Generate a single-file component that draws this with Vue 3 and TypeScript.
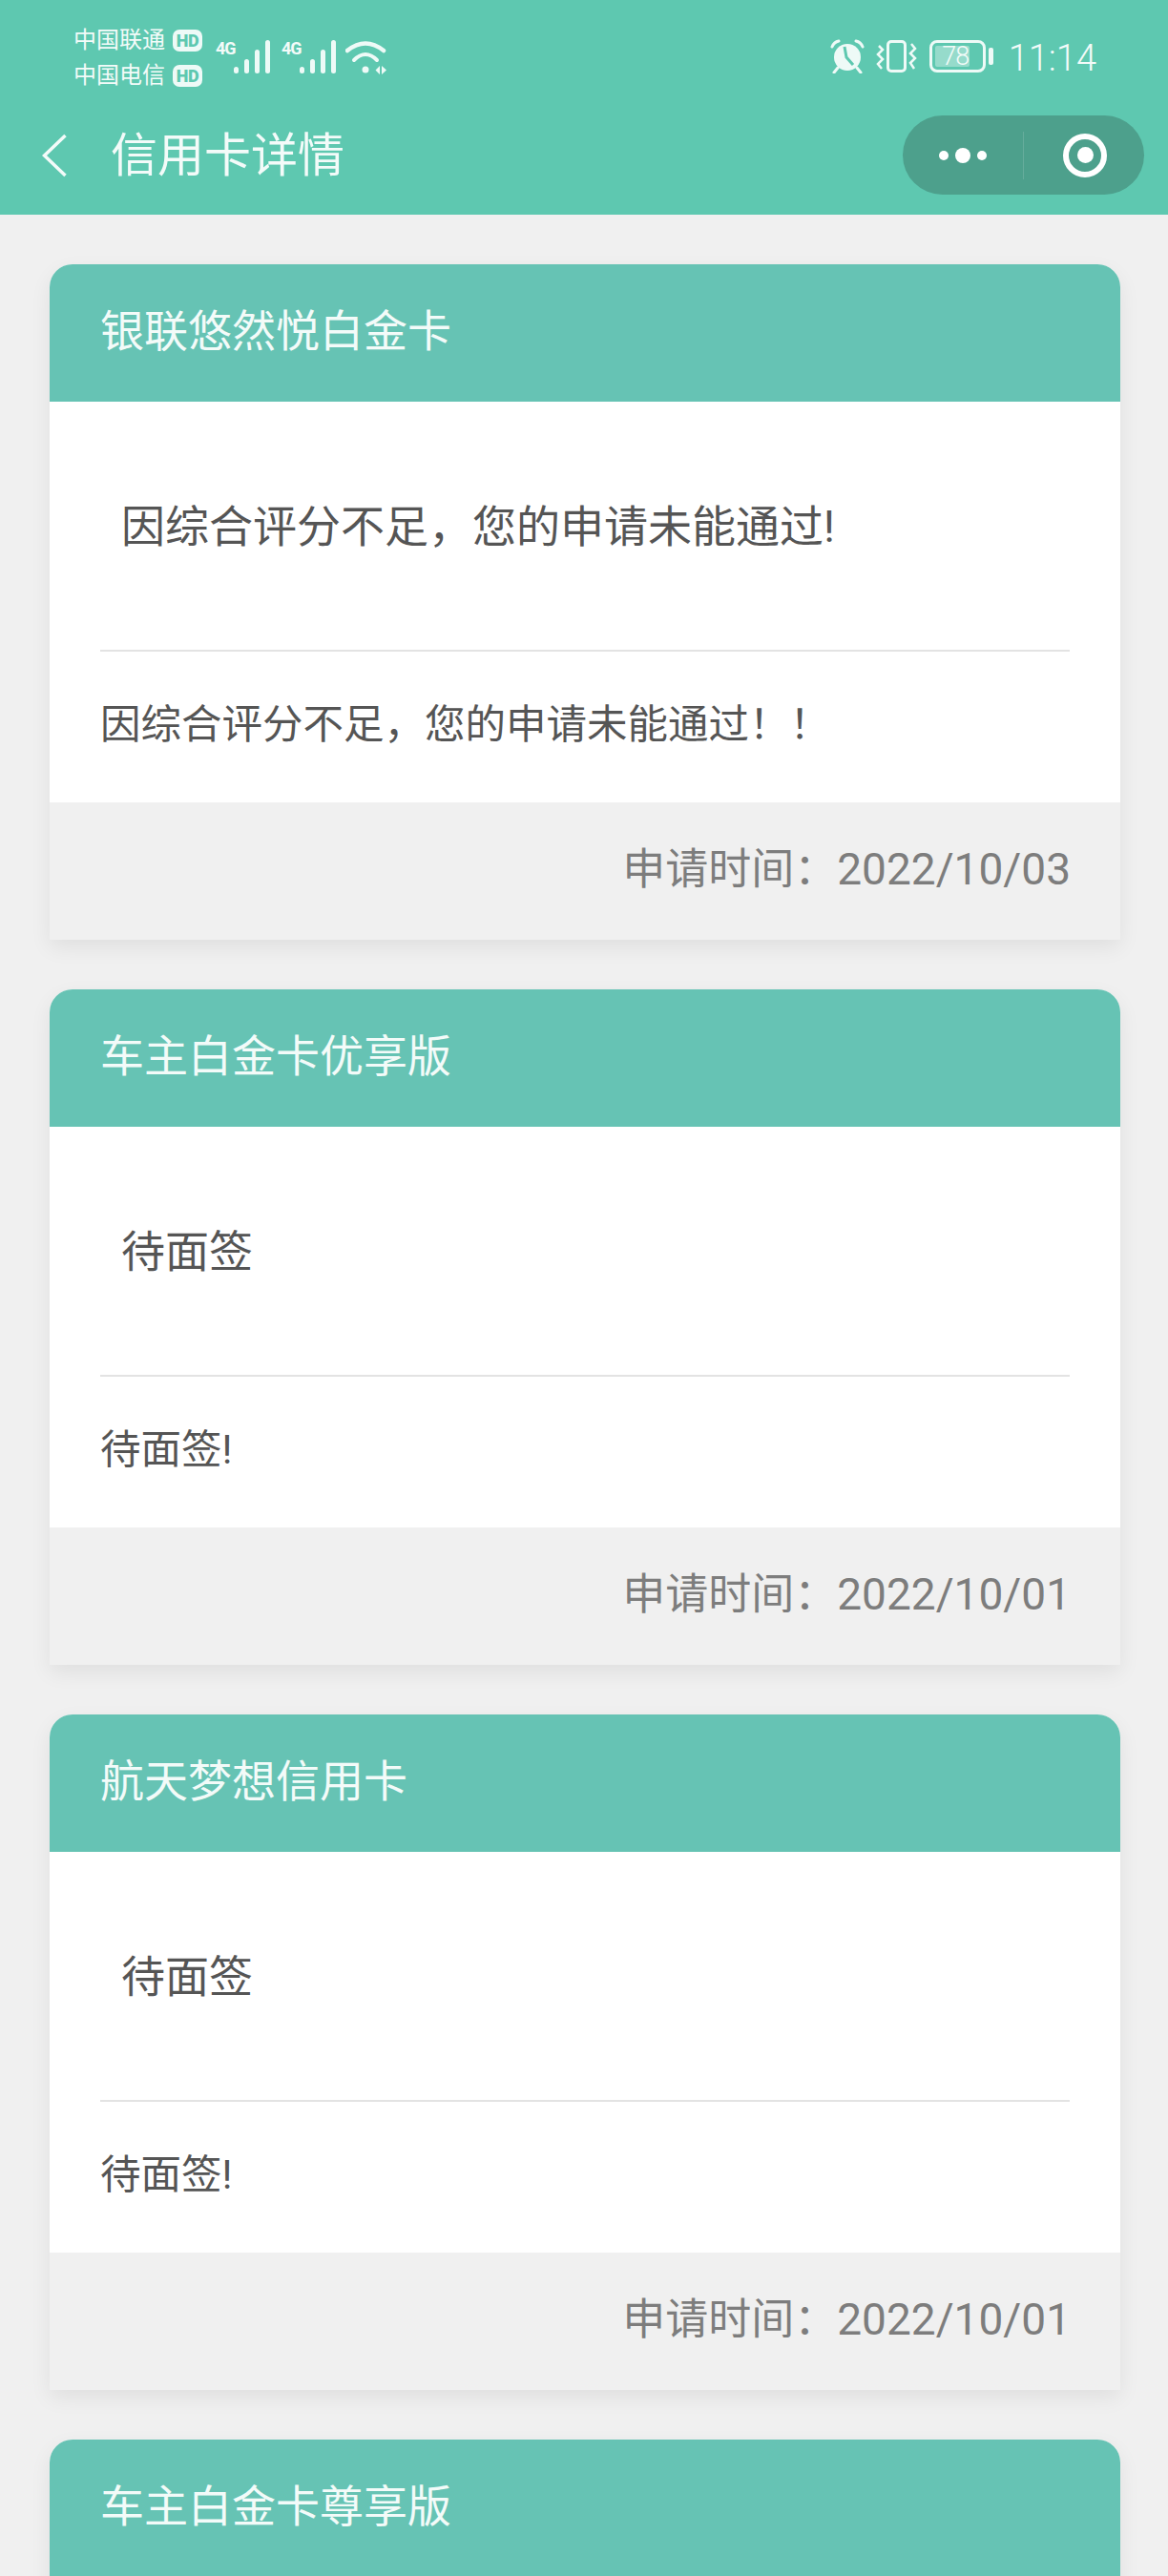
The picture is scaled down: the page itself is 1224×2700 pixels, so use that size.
<script setup lang="ts">
interface CardItem {
  name: string
  status: string
  detail: string
  date: string
}

const cards: CardItem[] = [
  { name: '银联悠然悦白金卡', status: '因综合评分不足，您的申请未能通过!', detail: '因综合评分不足，您的申请未能通过！！', date: '2022/10/03' },
  { name: '车主白金卡优享版', status: '待面签', detail: '待面签!', date: '2022/10/01' },
  { name: '航天梦想信用卡', status: '待面签', detail: '待面签!', date: '2022/10/01' },
  { name: '车主白金卡尊享版', status: '待面签', detail: '待面签!', date: '2022/10/01' },
]

const barHeights = [7, 15, 25, 35]
</script>

<template>
  <div class="page">
    <header class="top">
      <div class="status">
        <div class="carriers">
          <div class="carrier">中国联通<span class="hd">HD</span></div>
          <div class="carrier">中国电信<span class="hd">HD</span></div>
        </div>
        <div v-for="n in 2" :key="n" class="signal">
          <span class="net">4G</span>
          <div class="bars">
            <i v-for="h in barHeights" :key="h" :style="{ height: h + 'px' }"></i>
          </div>
        </div>
        <svg class="wifi" width="44" height="36" viewBox="0 0 44 36">
          <path d="M2 11 Q21 -4 40 11" fill="none" stroke="#eefaf7" stroke-width="4.500" stroke-linecap="round" />
          <path d="M9 21 Q21 9 33 21" fill="none" stroke="#eefaf7" stroke-width="4" stroke-linecap="round" />
          <circle cx="21" cy="31" r="3.500" fill="#eefaf7" />
          <path d="M36 27 L31.500 31.500 L36 36 Z M38 27 L43 31.500 L38 36 Z" fill="#eefaf7" />
        </svg>
        <div class="spacer"></div>
        <svg class="alarm" width="36" height="36" viewBox="0 0 36 36">
          <circle cx="18" cy="19" r="14" fill="#eefaf7" />
          <path d="M15 8 L17 19 L24 27" fill="none" stroke="#5ec8b0" stroke-width="3" />
          <path d="M2 8 Q4 3 9 2 M34 8 Q32 3 27 2 M8 30 L4 35 M28 30 L32 35" fill="none" stroke="#eefaf7" stroke-width="3" stroke-linecap="round" />
        </svg>
        <svg class="vibrate" width="43" height="36" viewBox="0 0 43 36">
          <rect x="12.500" y="1.500" width="18" height="31" rx="3.500" fill="none" stroke="#eefaf7" stroke-width="3" />
          <path d="M3 6 L7 10 L2 15 L7 20 L2 25 L6 30" fill="none" stroke="#eefaf7" stroke-width="2.500" />
          <path d="M37 4 L41 9 L36 14 L41 19 L36 24 L40 30" fill="none" stroke="#eefaf7" stroke-width="2.500" />
        </svg>
        <div class="battery">
          <div class="battery-body">
            <div class="battery-fill"></div>
            <span>78</span>
          </div>
          <div class="battery-cap"></div>
        </div>
        <span class="time">11:14</span>
      </div>
      <div class="nav">
        <svg class="back" width="26" height="46" viewBox="0 0 26 46">
          <path d="M24.500 2 L2.500 23 L24.500 44" fill="none" stroke="#f3fbf9" stroke-width="3.500" />
        </svg>
        <span class="nav-title">信用卡详情</span>
        <div class="capsule">
          <div class="more"><i></i><b></b><i></i></div>
          <div class="capsule-line"></div>
          <div class="close"><b></b></div>
        </div>
      </div>
    </header>

    <main class="list">
      <section v-for="card in cards" :key="card.name" class="card">
        <div class="card-head">{{ card.name }}</div>
        <div class="card-body">
          <div class="card-status">{{ card.status }}</div>
          <div class="card-detail">{{ card.detail }}</div>
        </div>
        <div class="card-foot"><span class="foot-label">申请时间：</span>{{ card.date }}</div>
      </section>
    </main>
  </div>
</template>

<style>
body {
  background: #f0f0f0;
}
</style>

<style scoped>
.page {
  width: 1224px;
  height: 2700px;
  overflow: hidden;
  background: #f0f0f0;
  font-family: Roboto, "Noto Sans CJK SC", sans-serif;
}

.top {
  height: 225px;
  background: #5ec8b0;
  color: #f3fbf9;
}

.status {
  height: 100px;
  box-sizing: border-box;
  padding: 24px 75px 0 77px;
  display: flex;
  align-items: flex-start;
}

.carriers {
  flex: none;
  width: 149px;
}

.carrier {
  height: 37px;
  display: flex;
  align-items: center;
  font-size: 24px;
  line-height: 37px;
  white-space: nowrap;
}

.hd {
  margin-left: 8px;
  width: 31px;
  height: 23px;
  border-radius: 7px;
  background: #eefaf7;
  color: #5ec8b0;
  font-size: 18px;
  font-weight: 900;
  line-height: 23px;
  letter-spacing: -0.5px;
  text-align: center;
}

.signal {
  flex: none;
  width: 69px;
  height: 36px;
  margin-top: 18px;
  position: relative;
}

.net {
  position: absolute;
  left: 0;
  top: 0;
  font-size: 18px;
  font-weight: 700;
  line-height: 18px;
  letter-spacing: -1px;
}

.bars {
  position: absolute;
  left: 19px;
  top: 0;
  display: flex;
  align-items: flex-end;
  gap: 6px;
  height: 35px;
}

.bars i {
  display: block;
  width: 5px;
  border-radius: 2.500px;
  background: #eefaf7;
}

.wifi {
  flex: none;
  margin-top: 18px;
  margin-left: -2px;
}

.spacer {
  flex: 1;
}

.alarm {
  flex: none;
  margin-top: 17px;
}

.vibrate {
  flex: none;
  margin-left: 12px;
  margin-top: 18px;
}

.battery {
  flex: none;
  margin-left: 13px;
  margin-top: 18px;
  display: flex;
  align-items: center;
  gap: 3px;
}

.battery-body {
  position: relative;
  width: 59px;
  height: 34px;
  box-sizing: border-box;
  border: 3px solid #eefaf7;
  border-radius: 8px;
}

.battery-fill {
  position: absolute;
  left: 3px;
  top: 3px;
  bottom: 3px;
  width: 36px;
  border-radius: 2px;
  background: rgba(255, 255, 255, 0.35);
}

.battery-body span {
  position: absolute;
  left: 0;
  right: 4px;
  top: 0;
  text-align: center;
  font-size: 27px;
  line-height: 28px;
  font-weight: 300;
  letter-spacing: -1px;
}

.battery-cap {
  width: 5px;
  height: 18px;
  border-radius: 2px;
  background: #eefaf7;
}

.time {
  flex: none;
  margin-left: 16px;
  margin-top: 13px;
  font-size: 38px;
  font-weight: 300;
  line-height: 48px;
}

.nav {
  height: 125px;
  display: flex;
  align-items: center;
  padding-left: 44px;
  padding-right: 25px;
}

.back {
  flex: none;
}

.nav-title {
  margin-left: 46px;
  font-size: 49px;
  line-height: 60px;
  padding-top: 2px;
}

.capsule {
  margin-left: auto;
  width: 253px;
  height: 83px;
  border-radius: 42px;
  background: #4da08c;
  display: flex;
  align-items: center;
}

.more {
  width: 126px;
  display: flex;
  justify-content: center;
  align-items: center;
  gap: 7px;
}

.more i {
  width: 10px;
  height: 10px;
  border-radius: 50%;
  background: #fff;
}

.more b {
  width: 16px;
  height: 16px;
  border-radius: 50%;
  background: #fff;
}

.capsule-line {
  width: 1px;
  height: 50px;
  background: rgba(255, 255, 255, 0.14);
}

.close {
  width: 46px;
  height: 46px;
  margin-left: 41px;
  box-sizing: border-box;
  border: 6px solid #fff;
  border-radius: 50%;
  display: flex;
  align-items: center;
  justify-content: center;
}

.close b {
  width: 17px;
  height: 17px;
  border-radius: 50%;
  background: #fff;
}

.list {
  padding: 52px 50px 0 52px;
  display: flex;
  flex-direction: column;
  gap: 52px;
}

.card {
  flex: none;
  border-radius: 24px 24px 0 0;
  background: #fff;
  box-shadow: 0 8px 22px rgba(0, 0, 0, 0.07);
}

.card-head {
  height: 144px;
  padding-left: 53px;
  border-radius: 24px 24px 0 0;
  background: #66c3b4;
  color: #f3fbf9;
  font-size: 46px;
  line-height: 141px;
}

.card-body {
  height: 420px;
  margin: 0 53px 0 53px;
  color: #555;
  display: flex;
  flex-direction: column;
}

.card-status {
  height: 262px;
  box-sizing: border-box;
  padding-left: 22px;
  border-bottom: 2px solid #e3e3e3;
  font-size: 46px;
  line-height: 262px;
}

.card-detail {
  flex: 1;
  font-size: 42.500px;
  line-height: 154px;
  text-spacing-trim: space-all;
}

.card-foot {
  height: 144px;
  padding-right: 52px;
  background: #f0f0f0;
  color: #7d7d7d;
  font-size: 46px;
  line-height: 140px;
  text-align: right;
}

.foot-label {
  font-size: 45px;
}
</style>
